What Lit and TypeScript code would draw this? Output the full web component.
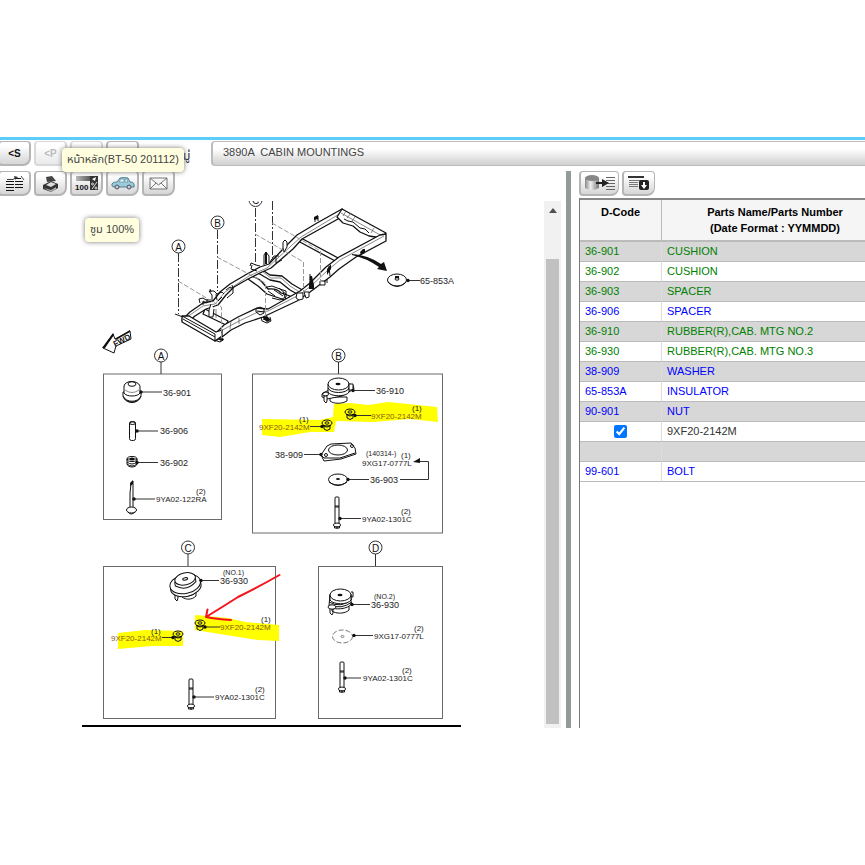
import { LitElement, html, svg, css } from "lit";
import { customElement, state } from "lit/decorators.js";

type Row = { code: string; name: string; tone: "green" | "blue" | "plain"; check?: boolean };

const ROWS: Row[] = [
  { code: "36-901", name: "CUSHION", tone: "green" },
  { code: "36-902", name: "CUSHION", tone: "green" },
  { code: "36-903", name: "SPACER", tone: "green" },
  { code: "36-906", name: "SPACER", tone: "blue" },
  { code: "36-910", name: "RUBBER(R),CAB. MTG NO.2", tone: "green" },
  { code: "36-930", name: "RUBBER(R),CAB. MTG NO.3", tone: "green" },
  { code: "38-909", name: "WASHER", tone: "blue" },
  { code: "65-853A", name: "INSULATOR", tone: "blue" },
  { code: "90-901", name: "NUT", tone: "blue" },
  { code: "", name: "9XF20-2142M", tone: "plain", check: true },
  { code: "", name: "", tone: "plain" },
  { code: "99-601", name: "BOLT", tone: "blue" },
];

const FONT = css`"Liberation Sans", "Noto Sans Thai", "Noto Sans", sans-serif`;

/* Exploded view of the cabin mountings */
@customElement("parts-diagram")
export class PartsDiagram extends LitElement {
  static styles = css`
    :host { display: block; }
    svg { display: block; width: 544px; height: 527px; font-family: ${FONT}; }
    .t9 { font-size: 9px; fill: #222; }
    .t8 { font-size: 8px; fill: #222; }
    .t7 { font-size: 7px; fill: #222; }
    .mark { fill: #8a5a10; }
    .ref { font-size: 10px; fill: #111; text-anchor: middle; }
    .fwd { font-size: 8px; font-weight: bold; fill: #111; }
    .box { fill: none; stroke: #6a6a6a; }
    .ring { fill: #fff; stroke: #333; }
    .line { stroke: #333; fill: none; }
    .dash { stroke: #333; fill: none; stroke-dasharray: 9 2 2 2; }
    .soft { stroke: #999; fill: none; stroke-dasharray: 5 2; }
    .rail { fill: #fff; stroke: #111; stroke-width: 1.3; stroke-linejoin: round; }
    .thin { fill: none; stroke: #555; stroke-width: 0.7; }
    .ink { fill: none; stroke: #111; stroke-width: 1; }
    .part { fill: #fff; stroke: #111; stroke-width: 1; }
    .black { fill: #111; }
    .yellow { fill: #ffff00; }
    .red { fill: none; stroke: #f5141b; stroke-width: 2; stroke-linecap: round; stroke-linejoin: round; }
  `;

  private ref(x: number, y: number, letter: string, stem = 0) {
    return svg`
      ${stem ? svg`<path class="line" d="M${x} ${y + 6}V${stem}" />` : null}
      <circle class="ring" cx=${x} cy=${y} r="6.5" />
      <text class="ref" x=${x} y=${y + 4}>${letter}</text>`;
  }
  private lead(x: number, y: number, to: number) {
    return svg`<path class="line" d="M${x} ${y}H${to}" /><circle class="black" cx=${x} cy=${y} r="1.7" />`;
  }
  private txt(size: number, x: number, y: number, s: string, mark = false) {
    return svg`<text class="t${size} ${mark ? "mark" : ""}" x=${x} y=${y}>${s}</text>`;
  }
  private bolt(x: number, y: number, h: number) {
    return svg`<rect class="part" x=${x - 2} y=${y} width="4" height=${h - 4} rx="1" />
      <path class="ink" d="M${x - 2} ${y + 9}h4M${x - 2} ${y + 10}h4" />
      <ellipse class="part" cx=${x} cy=${y + h - 3} rx="3.6" ry="2" />
      <path class="ink" d="M${x - 2.5} ${y + h - 2}v2h5v-2M${x} ${y + h - 2}v3" />`;
  }
  private nut(x: number, y: number) {
    return svg`<path class="ink" d="M${x - 3} ${y + 1}v4q3 3 6 0v-4" />
      <ellipse class="ink" cx=${x} cy=${y - 1} rx="5" ry="3" />
      <ellipse class="ink" cx=${x} cy=${y - 1} rx="2" ry="1.2" />
      <path class="ink" d="M${x - 4} ${y + 1}q4 4 8 0" />`;
  }

  private frame() {
    return svg`
      <path class="rail" d="M205 309L228 321L226 325L203 314Z" />
      <path class="thin" d="M213 307v9M216 309v9" />
      <path class="rail" d="M246 275Q256 276 262 282L268 289Q277 288 281 293L290 296L287 301L279 298L267 294L258 286L248 279Z" />
      <path class="ink" d="M267 287l5 -1 8 3 6 2v6l-6 3 -8 -2M274 290l9 6M279 288l8 7M268 291l7 5M283 292l3 8" />
      <path class="rail" d="M261 269L270 275L282 276L292 284L304 291L299 295L290 290L280 282L270 280L258 273Z" />
      <path class="thin" d="M263 272l8 6 10 0 9 8 11 7" />
      <path class="rail" d="M301 238L340 259L337 262L298 241Z" />
      <path class="rail" d="M182 320L190 312L203 303L213 301L220 292L230 284L247 274L260 267L269 264L284 248L297 235L317 223L342 209L346 213L338 219L302 239L293 249L271 268L262 272L248 279L234 287L226 295L218 305L206 309L195 316L189 321Z" />
      <path class="thin" d="M187 317l16 -11 12 -2 10 -12 24 -16 18 -8 24 -22 10 -9 40 -24" />
      <path class="rail" d="M342 209L386 233L382 238L369 236L360 232L353 226L343 223L337 217Z" />
      <path class="thin" d="M341 213l41 23M346 211l-3 5M351 213l-4 5M355 217l-3 4M374 228l-3 5" />
      <path class="ink" d="M344 219l4 2 5 1 7 6 5 1 4 4" />
      <path class="rail" d="M386 234V241L356 257L339 269L330 277L310 292L297 301L280 309L263 317L245 323L231 330L222 337L215 341V334L224 325L238 317L257 308L268 309L300 291L310 283L326 267L339 257L380 235Z" />
      <path class="thin" d="M384 236l-44 24 -12 10 -17 16 -12 9 -31 16 -10 1 -19 9 -22 12M239 318v6M231 321l-1 8M299 293v6" />
      <path class="rail" d="M182 316L189 316L216 332L222 330V336L215 341L182 322Z" />
      <path class="ink" d="M175 314l8 3M182 316l33 18v7M183 319l32 18M214 340l6 2 3 -2" />
      <path class="ink" d="M200 303l-1 -4 4 -1 3 2 5 0M203 305v-4l4 2v-4M212 301v-6l-3 -4h5l3 3 5 -2 2 2M211 292l-1 -3M216 294l1 6M226 290l4 -3 3 2v4l-6 5M222 297l-4 4M232 285l1 4" />
      <path class="part" d="M211 304l-2 6v7h4l1 -8M283 248v-6l2 -2 2 2v5l-3 5z" />
      <path class="ink" d="M264 265v-10l2 -3 3 4v7M266 264v-9M270 262l4 -6h5M276 257v6l6 -3M250 266l1 -3 5 2 4 1M252 265l-1 4 6 2M315 222v-4l3 -2v5" />
      <path class="black" d="M265 252h2v12h-2zM309 285l1 -9h2l2 9v4h-5zM314 220v-3l4 -2v4zM327 269l4 -5v5l-4 6zM360 252l3 -3 2 0v4l-4 2z" />
      <path class="part" d="M297 293h6v6l-4 1 -3 -2zM304 292h5v5l-3 1zM320 281h5v4h-5z" />
      <path class="ink" d="M256 309l4 -2 4 2v4l-4 2 -4 -3zM261 317l1 4 5 2 4 -2 -1 -4M263 319l6 2M257 311l7 1M310 280v-6M324 282l3 -3v4M329 266l1 10" />
      <path class="black" d="M262 317l5 -1 4 4 -4 2zM218 339l5 -1 1 2 -3 1z" />
    `;
  }

  render() {
    return html`<svg viewBox="0 201 544 527" role="img" aria-label="Cabin mountings">
      ${svg`
      ${this.frame()}
      <path class="dash" d="M178.500 253V314M217.500 230V291M255.500 208V265M272.500 201V261" />
      <path class="soft" d="M178 281L221.500 307V338M217 257L265.500 283V316M255 234L303.500 262V295M272 223L320.500 251V284" />
      ${this.ref(178.5, 246.5, "A")} ${this.ref(217.5, 222.5, "B")} ${this.ref(255.5, 200, "C")}
      <path class="black" d="M352 254Q368 255 381 264L384 262 387 271 377 269 379 267Q366 258 352 255Z" />
      <ellipse class="part" cx="397" cy="280" rx="9.500" ry="6" />
      <path class="ink" d="M388 282q9 9 18 0" />
      <ellipse class="part" cx="397" cy="279" rx="2" ry="1.200" /><path class="black" d="M395 276h4v2h-4z" />
      ${this.lead(408, 280.5, 420)} ${this.txt(9, 420, 284, "65-853A")}

      <path class="part" d="M103 348L113 334L115 339L130 331L131 339L116 346L114 353Z" />
      <path class="black" d="M102 348L113 333L114 335L105 348ZM115 339l15 -9v2l-14 8z" />
      <text class="fwd" transform="translate(115 347) rotate(-27)" x="0" y="0">FWD</text>

      <rect class="box" x="103.500" y="374" width="118" height="145.500" />
      ${this.ref(161, 355.5, "A", 374)}
      <path class="part" d="M123 392v4c2 8 16 8 18 0v-4z" />
      <path class="ink" d="M123 396c3 7 15 7 18 0M124 398c3 6 13 6 16 0" />
      <path class="part" d="M124 393v-7c1 -6 14 -6 16 0v7c-2 4 -14 4 -16 0z" />
      <ellipse class="ink" cx="132" cy="384" rx="4" ry="2.300" /><path class="thin" d="M125 390q7 5 14 0" />
      ${this.lead(141, 392, 162)} ${this.txt(9, 163, 396, "36-901")}
      <rect class="part" x="129.500" y="422" width="6" height="18.500" rx="2" /><ellipse class="ink" cx="132.500" cy="423" rx="3" ry="1.500" />
      ${this.lead(137, 431, 158)} ${this.txt(9, 160, 434, "36-906")}
      <path class="part" d="M127 459v5c1 4 9 4 10 0v-5z" />
      <ellipse class="ink" cx="132" cy="459" rx="5" ry="2.500" /><ellipse class="black" cx="132" cy="459" rx="2.500" ry="1.500" />
      <path class="ink" d="M127 462q5 4 10 0M127 464q5 4 10 0" />
      ${this.lead(137, 462.5, 158)} ${this.txt(9, 160, 466, "36-902")}
      <path class="part" d="M130 493l1 -9 2 -3v12v16h-3z" /><path class="black" d="M130 486v-3l3 -3v4z" />
      <ellipse class="part" cx="131.500" cy="510" rx="5" ry="3" /><path class="ink" d="M128 512q3 4 7 0" />
      ${this.lead(134, 499, 155)} ${this.txt(8, 196, 494, "(2)")} ${this.txt(8, 156, 502, "9YA02-122RA")}

      <rect class="box" x="252.500" y="374" width="190" height="159" />
      ${this.ref(338.5, 355.5, "B", 374)}
      <path class="yellow" d="M334 404L350 403L368 405L388 402L437 407L438 422L410 419L373 422L336 421L334 432L310 432L280 437L262 435V419L320 420L333 417Z" />
      <path class="part" d="M330 397v4c4 3 12 3 17 0v-4z" />
      <path class="part" d="M322 394l5 -3 22 -7 4 1 1 4 -12 7 -15 3 -5 -2z" />
      <path class="part" d="M328 384v8c2 5 19 5 21 0v-8z" /><ellipse class="part" cx="338.500" cy="384" rx="10.500" ry="6" />
      <path class="ink" d="M328 388c2 6 19 6 21 0" /><ellipse class="black" cx="338" cy="384" rx="2.500" ry="1.300" />
      <ellipse class="ink" cx="325.500" cy="394" rx="3" ry="2" /><path class="part" d="M324 396v5l2 2 1 -2v-5zM349 384h4v6h-4z" />
      ${this.lead(353, 390.5, 375)} ${this.txt(9, 376, 394, "36-910")}
      ${this.nut(350, 413)} ${this.lead(355, 415.5, 371)} ${this.txt(8, 412, 411, "(1)")} ${this.txt(8, 371, 419, "9XF20-2142M", true)}
      ${this.nut(327, 424)} ${this.lead(322, 426.5, 310)} ${this.txt(8, 299, 422, "(1)")} ${this.txt(8, 259, 430, "9XF20-2142M", true)}
      <path class="part" d="M321 455l6 -9 4 -2 20 -1 4 5 1 6 -15 5 -17 2z" /><path class="ink" d="M321 455l3 3h16l15 -5" />
      <ellipse class="part" cx="338" cy="450" rx="9.500" ry="5" /><circle class="ink" cx="326" cy="455" r="1.500" /><circle class="ink" cx="352" cy="446" r="1.500" />
      ${this.lead(321, 454.5, 304)} ${this.txt(9, 275, 458, "38-909")}
      <ellipse class="part" cx="338" cy="479.500" rx="9.500" ry="5.500" /><path class="ink" d="M329 482q9 7 18 0" /><ellipse class="black" cx="338" cy="479" rx="2" ry="1" />
      ${this.lead(348, 479.5, 369)} ${this.txt(9, 370, 483, "36-903")}
      <path class="line" d="M400 479.500H428.500V461.500H416" /><path class="black" d="M413 462l7 -4v5z" />
      ${this.txt(7, 366, 456, "(140314-)")} ${this.txt(8, 401, 458, "(1)")} ${this.txt(8, 362, 466, "9XG17-0777L")}
      ${this.bolt(337, 497, 31)} ${this.lead(340, 518.5, 361)} ${this.txt(8, 401, 514, "(2)")} ${this.txt(8, 362, 522, "9YA02-1301C")}

      <rect class="box" x="103.500" y="566.500" width="172" height="152" />
      ${this.ref(188, 547.5, "C", 566)}
      <path class="yellow" d="M118 633L145 630L183 631V646L152 646L118 649ZM195 615L228 618L245 622L279 625V641L258 640L195 630Z" />
      <path class="part" d="M181 590l1 7c4 3 10 3 14 -1v-8z" /><path class="ink" d="M182 595q7 3 13 -2M175 593v6l2 2 1 -3v-4" />
      <g transform="rotate(-12 185 583)">
        <ellipse class="part" cx="185" cy="587" rx="15.500" ry="9.500" /><ellipse class="part" cx="185" cy="584" rx="15.500" ry="9.500" />
        <ellipse class="part" cx="186" cy="579" rx="10.500" ry="6" /><path class="ink" d="M175 580v4q10 8 21 0v-4" /><ellipse class="ink" cx="186" cy="579" rx="2.500" ry="1.200" />
      </g>
      ${this.lead(201, 580.5, 219)} ${this.txt(7, 223, 575, "(NO.1)")} ${this.txt(9, 220, 584, "36-930")}
      ${this.nut(200, 624)} ${this.lead(205, 627, 220)} ${this.txt(8, 261, 622, "(1)")} ${this.txt(8, 220, 630, "9XF20-2142M", true)}
      ${this.nut(178, 635)} ${this.lead(173, 637.5, 162)} ${this.txt(8, 151, 634, "(1)")} ${this.txt(8, 111, 641, "9XF20-2142M", true)}
      ${this.bolt(191, 679, 30)} ${this.lead(194, 697, 214)} ${this.txt(8, 255, 692, "(2)")} ${this.txt(8, 215, 700, "9YA02-1301C")}
      <path class="red" d="M279.500 575Q262 585 238 597Q224 606 206 617L207.500 609.500M206 617Q216 619 231 620" />

      <rect class="box" x="318.500" y="566.500" width="124" height="152" />
      ${this.ref(375.5, 547.5, "D", 566)}
      <path class="part" d="M332 606v5c4 3 13 3 17 -1v-6z" />
      <path class="part" d="M330 594l-1 12c4 5 20 3 22 -2v-10z" /><path class="ink" d="M329 602q12 7 23 -3M330 605q11 5 22 -3" />
      <path class="part" d="M330 595v5c3 5 18 5 21 0v-5z" /><ellipse class="part" cx="340.500" cy="595" rx="10.500" ry="6" />
      <ellipse class="black" cx="340" cy="595" rx="2.500" ry="1.200" /><ellipse class="part" cx="332" cy="607" rx="4" ry="2.200" />
      <path class="ink" d="M330 609v4l2 2 1 -2v-4M351 592h2v5h-2" />
      ${this.lead(352, 604.5, 370)} ${this.txt(7, 374, 599, "(NO.2)")} ${this.txt(9, 371, 608, "36-930")}
      <ellipse cx="342.500" cy="636.500" rx="10" ry="6.500" fill="#fff" stroke="#777" stroke-dasharray="5 2" /><ellipse class="thin" cx="342.500" cy="636.500" rx="1.500" ry="1" />
      ${this.lead(354, 635.5, 373)} ${this.txt(8, 414, 631, "(2)")} ${this.txt(8, 374, 639, "9XG17-0777L")}
      ${this.bolt(342, 662, 30)} ${this.lead(345, 678, 361)} ${this.txt(8, 402, 673, "(2)")} ${this.txt(8, 363, 681, "9YA02-1301C")}

      <rect x="82" y="725" width="379" height="2" fill="#000" />
      `}
    </svg>`;
  }
}

@customElement("app-root")
export class AppRoot extends LitElement {
  @state() private picked = true;

  static styles = css`
    :host { display: block; min-height: 100vh; box-sizing: border-box; padding-top: 137px; background: #fff; overflow: hidden; font-family: ${FONT}; font-size: 11px; color: #333; }
    .stripe { height: 3px; background: #5bcdf8; margin-bottom: 1px; }
    .head { position: relative; display: grid; grid-template-columns: 211px minmax(0, 1fr); height: 25px; margin-bottom: 5px; }
    .bar { display: flex; gap: 3px; margin-left: -2px; }
    .btn { flex: none; display: flex; align-items: center; justify-content: center; box-sizing: border-box; width: 33px; height: 25px; padding: 0; border: 2px solid #b5b5b5; border-top-width: 1px; border-radius: 4px 4px 8px 4px; background: linear-gradient(#fff 20%, #e9e9e9 60%, #d6d6d6); font: bold 10px ${FONT}; color: #111; }
    .btn[disabled] { opacity: 0.5; color: #777; }
    .wide { width: 40px; }
    .tool { border-width: 1px 1px 2px 2px; }
    .group { align-self: end; margin-left: 41px; font-size: 12px; line-height: 20px; color: #222; }
    .title { display: flex; align-items: center; padding: 0 10px 3px; border: 1px solid #bcbcbc; border-width: 1px 0 1px 2px; border-radius: 4px 0 0 4px; background: linear-gradient(#fff 30%, #cfcfcf); white-space: pre; font-size: 11px; font-weight: normal; margin: 0; color: #444; }
    .tip { position: absolute; z-index: 2; box-sizing: border-box; height: 24px; padding: 0 5px; border-radius: 4px; background: #ffffdf; box-shadow: 0 0 5px #777; font-size: 11px; line-height: 23px; white-space: nowrap; color: #444; }
    .home { left: 62px; top: 7px; }
    .zoom { left: 85px; top: 77px; }
    .main { display: grid; grid-template-columns: minmax(0, 566fr) 5px minmax(0, 294fr); }
    .split { background: #929a9a; }
    .view { display: grid; grid-template-columns: minmax(0, 1fr) 17px; margin: 5px 5px 0 0; }
    .canvas { overflow: hidden; }
    .scroll { display: flex; flex-direction: column; padding: 7px 2px 4px; background: #f1f1f1; }
    .up { align-self: center; width: 0; border: 4px solid transparent; border-top: 0; border-bottom: 5px solid #505050; }
    .thumb { flex: 1; margin-top: 46px; background: #c1c1c1; }
    .side { display: flex; flex-direction: column; padding-left: 8px; }
    .side .bar { margin: 0 0 2px; }
    .list { flex: 1; overflow: hidden; border-left: 1px solid #777; border-top: 2px solid #888; }
    table { border-collapse: separate; border-spacing: 0; table-layout: fixed; width: 309px; }
    .c1 { width: 82px; }
    th { box-sizing: border-box; height: 42px; padding: 0; border-bottom: 2px solid #bbb; border-right: 1px solid #bbb; background: #f5f5f5; font-size: 11px; line-height: 16px; color: #000; vertical-align: top; padding-top: 4px; }
    td { box-sizing: border-box; height: 20px; padding: 0 5px 1px; border-bottom: 1px solid #bbb; border-right: 1px solid #ddd; line-height: 17px; white-space: nowrap; }
    tr:nth-child(odd) td { background: #d7d7d7; }
    .green td { color: #008000; }
    .blue td { color: #0000ff; }
    .tick { padding: 0; }
    input { display: block; width: 13px; height: 13px; margin: 0 auto; accent-color: #0075ff; }
  `;

  render() {
    return html`
      <div class="stripe"></div>
      <header class="head">
        <div class="bar">
          <button class="btn">&lt;S</button>
          <button class="btn" disabled>&lt;P</button>
          <button class="btn" disabled aria-label="Next"></button>
          <button class="btn" aria-label="Home"></button>
          <span class="group">มู่</span>
        </div>
        <h1 class="title">3890A  CABIN MOUNTINGS</h1>
        <div class="tip home" role="tooltip">หน้าหลัก(BT-50 201112)</div>
        <div class="tip zoom" role="tooltip">ซูม 100%</div>
      </header>
      <main class="main">
        <section>
          <div class="bar">
            <button class="btn" aria-label="Lists"><svg width="20" height="16"><path d="M1 6.500h8M1 9.500h8M1 12.500h8M1 15.500h8M11 3.500h5M10 6.500h8M10 9.500h8M10 12.500h8" stroke="#111" /><path d="M2 4.500h6l3 -2M16 1l3 4" fill="none" stroke="#444" /><path d="M9 1l4 1 -3 3z" fill="#333" /></svg></button>
            <button class="btn" aria-label="Print"><svg width="18" height="17"><path d="M5 7L4 2l6 -1 4 5z" fill="#444" /><path d="M1 10l8 -4 7 3v4l-7 4 -8 -3z" fill="#333" /><path d="M4 10l5 -3 5 2 -5 3z" fill="#ddd" /><path d="M2 13l7 2 5 -3v2l-5 3z" fill="#aaa" /></svg></button>
            <button class="btn" aria-label="Zoom 100%"><svg width="24" height="17"><defs><linearGradient id="g"><stop stop-color="#bbb" /><stop offset="1" stop-color="#222" /></linearGradient></defs><path d="M1 1h22v5H1z" fill="url(#g)" /><path d="M15 1h8v14h-8z" fill="#333" /><path d="M17 4l4 -2 -1 4z" fill="#fff" /><path d="M17 14l5 -7" stroke="#ddd" /><circle cx="17.500" cy="9" r="1" fill="none" stroke="#ddd" /><circle cx="21" cy="13" r="1" fill="none" stroke="#ddd" /><text x="0" y="15" font-size="8" font-weight="bold" fill="#111">100</text></svg></button>
            <button class="btn" aria-label="Vehicle"><svg width="24" height="14"><path d="M1 10q-1 -4 5 -4l3 -4q5 -1 8 0l2 4q5 0 4 5l-3 0H3z" fill="#9ccbdc" stroke="#4f7f90" /><path d="M8 6l2 -3h3v3zM14 6v-3h2l1 3z" fill="#e8f6fb" stroke="#4f7f90" stroke-width=".6" /><circle cx="6" cy="11" r="2" fill="#ccc" stroke="#456" /><circle cx="18" cy="11" r="2" fill="#ccc" stroke="#456" /></svg></button>
            <button class="btn" aria-label="Mail"><svg width="19" height="13"><path d="M1 1h17v11H1zM1 1l8.500 7L18 1M1 12l6 -6M18 12l-6 -6" fill="#fff" fill-opacity=".6" stroke="#666" stroke-width=".9" /></svg></button>
          </div>
          <div class="view">
            <div class="canvas"><parts-diagram></parts-diagram></div>
            <div class="scroll"><div class="up"></div><div class="thumb"></div></div>
          </div>
        </section>
        <div class="split"></div>
        <section class="side">
          <div class="bar">
            <button class="btn tool wide" aria-label="Load list"><svg width="32" height="18"><defs><linearGradient id="c"><stop stop-color="#888" /><stop offset=".4" stop-color="#eee" /><stop offset="1" stop-color="#777" /></linearGradient></defs><path d="M1 4v10q7 4 14 0V4z" fill="url(#c)" /><ellipse cx="8" cy="4" rx="7" ry="3" fill="#888" /><path d="M22 3.500h9M22 6.500h9M22 9.500h9M22 12.500h9M22 15.500h9" stroke="#666" /><path d="M12 8h6V5l7 4 -7 4v-3h-6z" fill="#222" /></svg></button>
            <button class="btn tool" aria-label="Download list"><svg width="22" height="16"><path d="M0 2h16" stroke="#333" stroke-width="2" /><path d="M1 5.500h14M1 7.500h9M1 9.500h9M1 11.500h9" stroke="#777" /><rect x="11" y="5" width="10" height="10" rx="2" fill="#222" /><path d="M16 7v4" stroke="#fff" stroke-width="2" /><path d="M13 10h6l-3 4z" fill="#fff" /></svg></button>
          </div>
          <div class="list">
            <table>
              <colgroup><col class="c1" /><col /></colgroup>
              <thead><tr><th>D-Code</th><th>Parts Name/Parts Number<br />(Date Format : YYMMDD)</th></tr></thead>
              <tbody>
                ${ROWS.map((r) => html`<tr class=${r.tone}>
                  ${r.check
                    ? html`<td class="tick"><input type="checkbox" aria-label=${r.name} .checked=${this.picked}
                        @change=${(e: Event) => (this.picked = (e.target as HTMLInputElement).checked)} /></td>`
                    : html`<td>${r.code}</td>`}
                  <td>${r.name}</td>
                </tr>`)}
              </tbody>
            </table>
          </div>
        </section>
      </main>
    `;
  }
}
